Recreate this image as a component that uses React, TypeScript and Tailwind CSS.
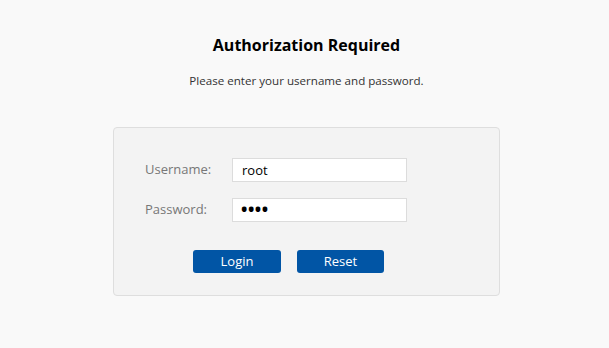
export default function App() {
  return (
    <div className="min-h-[348px] w-full bg-[#f9f9f9] pl-[4px] pt-[35px] font-['Open_Sans',sans-serif] text-[#333]">
      <h1 className="text-center text-[16px] font-bold leading-[20px] text-black">Authorization Required</h1>
      <p className="mt-[18px] text-center text-[11.6px] leading-[16px] text-[#333]">
        Please enter your username and password.
      </p>

      <div className="mx-auto mt-[38px] w-[387px] rounded-[4px] border border-[#dedede] bg-[#f3f3f3] pb-[22px] pt-[30px]">
        <div className="flex flex-col gap-[16px]">
          <div className="flex items-center">
            <label className="w-[118px] pl-[31px] text-[13px] text-[#777]">Username:</label>
            <input
              className="h-[24px] w-[175px] border border-[#dcdcdc] bg-white px-[9px] text-[13px] text-black outline-none"
              defaultValue="root"
            />
          </div>
          <div className="flex items-center">
            <label className="w-[118px] pl-[31px] text-[13px] text-[#777]">Password:</label>
            <input
              type="password"
              className="h-[24px] w-[175px] border border-[#dcdcdc] bg-white px-[8px] text-[17px] font-bold tracking-[0.5px] text-black outline-none"
              defaultValue="root"
            />
          </div>
        </div>

        <div className="mt-[28px] flex gap-[16px] pl-[79px]">
          <button className="h-[23px] w-[88px] rounded-[3px] bg-[#0155a5] text-[13px] text-white">Login</button>
          <button className="h-[23px] w-[87px] rounded-[3px] bg-[#0155a5] text-[13px] text-white">Reset</button>
        </div>
      </div>
    </div>
  )
}
